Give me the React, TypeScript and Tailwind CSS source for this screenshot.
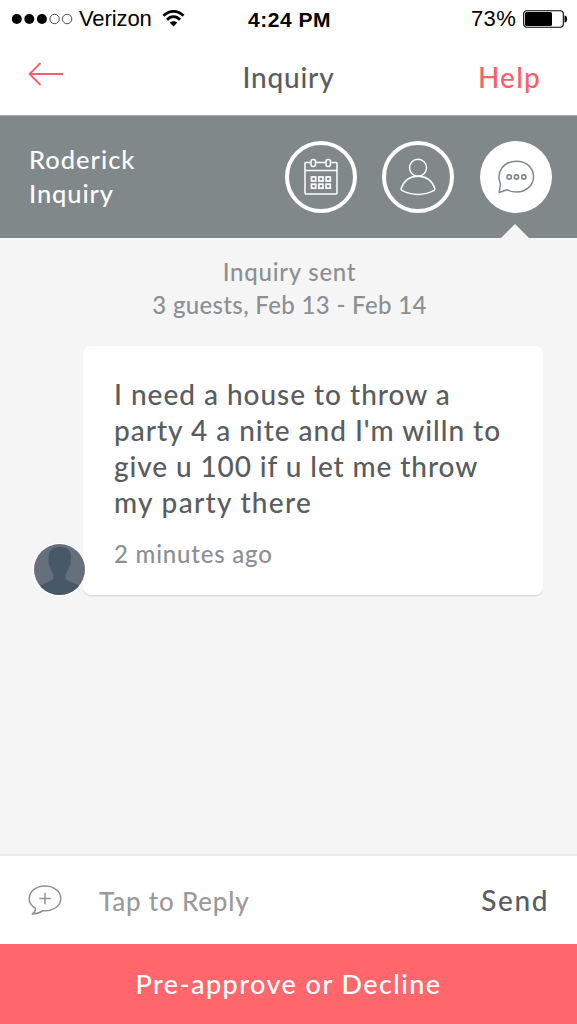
import type { ReactNode } from "react";

type TabProps = {
  label: string;
  active?: boolean;
  children: ReactNode;
};

const messageLines = [
  { text: "I need a house to throw a", className: "tracking-[0.97px]" },
  { text: "party 4 a nite and I'm willn to", className: "tracking-[0.98px]" },
  { text: "give u 100 if u let me throw", className: "tracking-[0.9px]" },
  { text: "my party there", className: "tracking-[1.3px]" },
];

function StatusBar() {
  return (
    <div className="flex h-[38px] items-center justify-between pl-3 pr-[9px] font-['Liberation_Sans',Arial,sans-serif] text-[22px] text-black">
      <div className="flex w-[220px] items-center">
        <svg width="61" height="12" viewBox="0 0 61 12" aria-label="Signal strength">
          {[4.8, 17.3, 29.9].map((x) => (
            <circle key={x} cx={x} cy="6" r="5" fill="#000" />
          ))}
          {[42.6, 55.1].map((x) => (
            <circle key={x} cx={x} cy="6" r="4.7" fill="none" stroke="#222" strokeWidth="0.8" />
          ))}
        </svg>
        <span className="ml-[6px] text-[22px] leading-none tracking-[-0.1px]">Verizon</span>
        <svg className="ml-[10px]" width="23" height="18" viewBox="0 0 23 18" fill="none" stroke="#000" strokeWidth="2.7">
          <path d="M1.500 5.800C7.200-.2 15.800-.2 21.500 5.800" />
          <path d="M5 9.700c3.900-4 9.100-4 13 0" />
          <path d="M11.500 16.500 7.800 12.700c2-2 5.400-2 7.400 0z" fill="#000" stroke="none" />
        </svg>
      </div>
      <span className="-ml-px text-[21px] font-bold leading-none tracking-[0.5px]">4:24 PM</span>
      <div className="flex w-[220px] items-center justify-end">
        <span className="leading-none tracking-[0.3px]">73%</span>
        <svg className="ml-[7px]" width="45" height="18" viewBox="0 0 45 18">
          <rect x="0.700" y="0.700" width="39.600" height="16.600" rx="3" fill="none" stroke="#000" strokeWidth="1.100" />
          <rect x="2" y="2" width="27" height="14" rx="1.500" />
          <path d="M41.500 5.500c3.500 0 3.500 7 0 7z" />
        </svg>
      </div>
    </div>
  );
}

function NavBar() {
  return (
    <header className="grid h-[77px] grid-cols-[1fr_auto_1fr] items-center pl-7 pr-9 text-[28px] leading-none">
      <button type="button" aria-label="Back" className="mb-[6px] w-9">
        <svg width="36" height="24" viewBox="0 0 36 24" fill="none" stroke="#f0616b" strokeWidth="1.800">
          <path d="M35 12H2M12.500 1 1.500 12l11 11" />
        </svg>
      </button>
      <h1 className="pl-2 tracking-[0.8px] text-[#5a5d60]">Inquiry</h1>
      <button type="button" className="justify-self-end tracking-[1.2px] text-[#fa5f68]">Help</button>
    </header>
  );
}

function Tab({ label, active, children }: TabProps) {
  return (
    <button
      type="button"
      aria-label={label}
      className={`relative grid size-[72px] place-items-center rounded-full ${active ? "bg-white text-[#81888a]" : "border-4 border-white text-white"}`}
    >
      {children}
      {active && (
        <svg className="absolute left-[20px] top-[83px]" width="30" height="15" viewBox="0 0 30 15">
          <path d="M0 15 15 0l15 15z" fill="#f5f5f5" />
        </svg>
      )}
    </button>
  );
}

function BookingHeader() {
  return (
    <section className="flex h-[123px] items-center justify-between border-t border-[#a5abac] bg-[#81888a] pl-[29px] pr-[25.5px]">
      <div className="-mt-[3px] text-[25.5px] leading-[34px] text-white">
        <p className="tracking-[1px]">Roderick</p>
        <p className="tracking-[0.9px]">Inquiry</p>
      </div>
      <div className="flex gap-[25.5px]">
        <Tab label="Dates">
          <svg width="34" height="38" viewBox="0 0 34 38" fill="none" stroke="currentColor" strokeWidth="1.500">
            <path d="M6.500 4.500H2q-1 0-1 1V35q0 1 1 1h30q1 0 1-1V5.500q0-1-1-1h-4.500M11.500 4.500h11M1 12.500h32" />
            <rect x="7" y="1.500" width="4.500" height="7" rx="2" />
            <rect x="22" y="1.500" width="4.500" height="7" rx="2" />
            {[19, 26.2].map((y) =>
              [7.5, 14.8, 22.1].map((x) => <rect key={`${x}-${y}`} x={x} y={y} width="4.200" height="4" strokeWidth="1.700" />)
            )}
          </svg>
        </Tab>
        <Tab label="Guest">
          <svg width="36" height="38" viewBox="0 0 36 38" fill="none" stroke="currentColor" strokeWidth="1.500">
            <circle cx="18" cy="9.800" r="8.500" />
            <path d="M1.200 30.500C4 22.500 10 18.300 18 18.300s14 4.200 16.800 12.200c.3.900 0 1.400-.8 1.900-9.500 5.300-22.500 5.300-32 0-.8-.5-1.100-1-.8-1.900z" />
          </svg>
        </Tab>
        <Tab label="Messages" active>
          <svg width="38" height="34" viewBox="0 0 38 34" fill="none" stroke="currentColor" strokeWidth="1.500">
            <path d="M2.200 32.500 3.500 24C-1.500 12 6.500 1.200 19.500 1.200c10 0 17 6.600 17 15.300 0 9-7.500 15.600-17 15.600-4 0-7-1-9.500-2.400z" strokeLinejoin="round" />
            {[12.2, 19.5, 26.8].map((x) => (
              <circle key={x} cx={x} cy="17" r="2.100" strokeWidth="1.700" />
            ))}
          </svg>
        </Tab>
      </div>
    </section>
  );
}

function Avatar() {
  return (
    <svg className="absolute -bottom-px -left-[50px]" width="53" height="53" viewBox="0 0 52 52">
      <defs>
        <clipPath id="avatar">
          <circle cx="26" cy="26" r="25" />
        </clipPath>
      </defs>
      <circle cx="26" cy="26" r="26" fill="#fff" />
      <g clipPath="url(#avatar)">
        <path d="M0 0h52v52H0z" fill="#66707c" />
        <path
          d="M15.500 15C14 7 20 3.500 27 4c7 0 11.500 4 10 12 .5 2.500 0 6-1.500 7-1 4-2.500 6-3.500 7.500v4.500c3 3.500 11 4 16.500 9.500V52H4v-8c5-4.500 13-6 16-9v-4.500c-1.500-2-2.500-4-3-7-1.500-1.500-2.500-5.500-1.500-8.500z"
          fill="#475867"
        />
      </g>
    </svg>
  );
}

export default function App() {
  return (
    <main className="flex h-[1024px] w-[577px] flex-col overflow-hidden bg-white font-['Lato',sans-serif] font-medium">
      <StatusBar />
      <NavBar />
      <BookingHeader />

      <section className="flex-1 bg-[#f5f5f5] pt-[18px]">
        <div className="text-center text-[24px] leading-[32.5px] text-[#8b9093]">
          <p className="pl-[2px] tracking-[0.75px]">Inquiry sent</p>
          <p className="pl-[2px] tracking-[0.34px]">3 guests, Feb 13 - Feb 14</p>
        </div>
        <article className="relative ml-[83px] mr-[34px] mt-[25px] h-[249px] rounded-lg bg-white pl-[31px] pt-[30px] shadow-[0_1.500px_0_#dedede]">
          <p className="text-[28px] leading-[36px] text-[#595c60]">
            {messageLines.map((line) => (
              <span key={line.text} className={`block whitespace-nowrap ${line.className}`}>{line.text}</span>
            ))}
          </p>
          <p className="mt-[17px] text-[24px] leading-[34px] tracking-[0.8px] text-[#8b9093]">2 minutes ago</p>
          <Avatar />
        </article>
      </section>

      <div className="flex h-[90px] items-center border-t-2 border-[#ececec] pl-7 pr-[28px]">
        <svg width="34" height="30" viewBox="0 0 34 30" fill="none" stroke="#929292" strokeWidth="1.500">
          <path d="M7.500 23.300C3.500 21 1.200 17.500 1.200 13.800 1.200 6.500 8 1 17 1s15.800 5.500 15.800 12.500S26 25.800 17 25.800h-2.500C11.500 28 8 28.900 4.300 29c2-1.500 3.500-3.300 3.200-5.700z" strokeLinejoin="round" />
          <path d="M17 7.800v11.500M11.300 13.500h11.500" />
        </svg>
        <span className="ml-[37px] mt-[2px] flex-1 text-[26px] tracking-[0.8px] text-[#9a9a9a]">Tap to Reply</span>
        <button type="button" className="text-[28px] tracking-[1.6px] text-[#595c60]">Send</button>
      </div>
      <button type="button" className="h-20 bg-[#ff676d] text-[27px] tracking-[1.45px] text-white">Pre-approve or Decline</button>
    </main>
  );
}
